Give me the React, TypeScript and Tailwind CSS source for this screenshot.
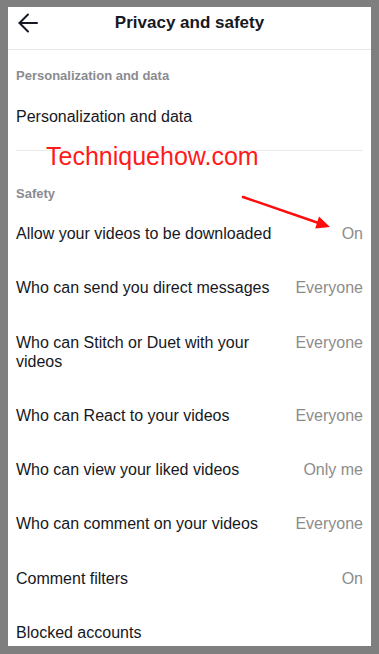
import React from "react";

const rows: { label: string; value?: string }[] = [
  { label: "Allow your videos to be downloaded", value: "On" },
  { label: "Who can send you direct messages", value: "Everyone" },
  { label: "Who can Stitch or Duet with your videos", value: "Everyone" },
  { label: "Who can React to your videos", value: "Everyone" },
  { label: "Who can view your liked videos", value: "Only me" },
  { label: "Who can comment on your videos", value: "Everyone" },
  { label: "Comment filters", value: "On" },
  { label: "Blocked accounts" },
];

export default function App() {
  return (
    <div className="h-[654px] w-[379px] bg-[#7f7f7f] pt-[7px] px-2 pb-2 font-['Liberation_Sans',Arial,sans-serif]">
      <div className="relative h-full bg-white overflow-hidden flex flex-col">
        {/* Header */}
        <div className="grid grid-cols-[40px_1fr_40px] items-center h-[43px] pb-[11px] border-b border-[#e6e6e6] shrink-0">
          <div className="pl-[10px] flex items-center">
            <svg width="20" height="20" viewBox="0 0 20 20" fill="none" stroke="#161823" strokeWidth="2" strokeLinecap="round" strokeLinejoin="round">
              <path d="M19 10H1.5" />
              <path d="M10 1.5L1.5 10L10 18.5" />
            </svg>
          </div>
          <h1 className="text-center text-[17px] font-bold text-[#161823]">Privacy and safety</h1>
          <div />
        </div>

        {/* Personalization */}
        <div className="h-[48px] pt-[4px] flex items-center px-2 shrink-0">
          <span className="text-[13px] font-bold text-[#8a8b91]">Personalization and data</span>
        </div>
        <div className="h-[34px] pt-[4px] flex items-center px-2 text-[16px] text-[#161823] shrink-0">
          Personalization and data
        </div>
        <div className="mt-[18px] mx-2 h-px bg-[#ebebeb] shrink-0" />

        {/* Safety */}
        <div className="mt-[33px] h-[20px] flex items-center px-2 shrink-0">
          <span className="text-[13px] font-bold text-[#8a8b91]">Safety</span>
        </div>
        <div className="mt-[2px] flex flex-col">
          {rows.map((r) => (
            <div key={r.label} className="flex items-start gap-3 px-2 pt-[18px] pb-[17.3px] leading-[19px] text-[16px] shrink-0">
              <span className="flex-1 min-w-0 text-[#161823]">{r.label}</span>
              {r.value && <span className="text-[#8c8c8c] whitespace-nowrap">{r.value}</span>}
            </div>
          ))}
        </div>

        {/* Watermark overlay */}
        <div className="absolute left-[38px] top-[137px] text-[25px] leading-[24px] text-[#ff1a1a] pointer-events-none">
          Techniquehow.com
        </div>
        <svg className="absolute left-0 top-0 pointer-events-none" width="363" height="260" viewBox="0 0 363 260">
          <line x1="235" y1="190" x2="312" y2="216.5" stroke="#ff0d0d" strokeWidth="2.5" strokeLinecap="round" />
          <polygon points="322,220 307.2,221.5 311,209.5" fill="#ff0d0d" />
        </svg>
      </div>
    </div>
  );
}
